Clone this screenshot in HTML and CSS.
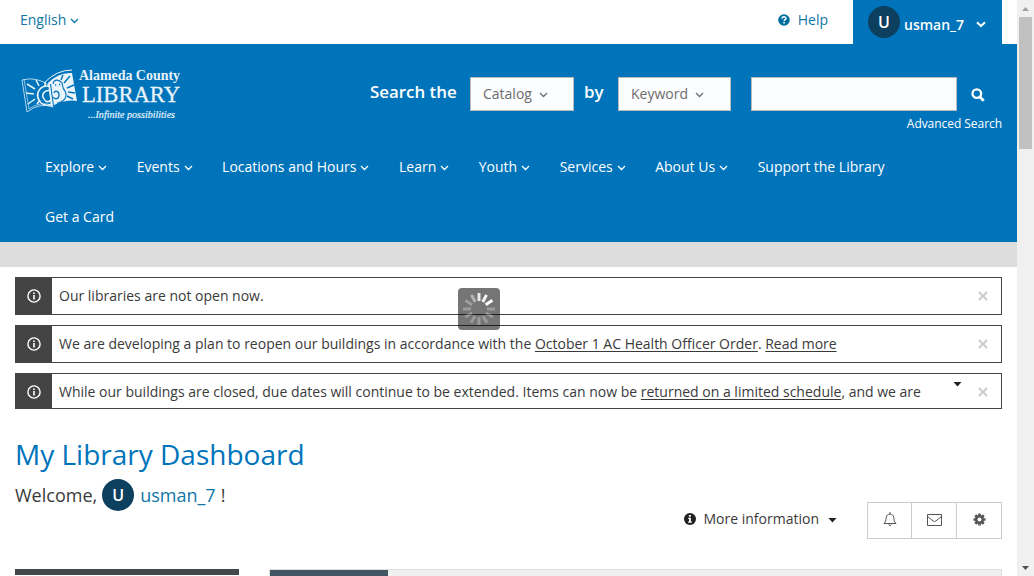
FILE: index.html
```html
<!DOCTYPE html>
<html lang="en">
<head>
<meta charset="utf-8">
<title>My Library Dashboard</title>
<link rel="stylesheet" href="styles.css">
</head>
<body>
<svg class="defs" width="0" height="0">
  <symbol id="chev" viewBox="0 0 9 6"><path d="M1 1 L4.5 4.5 L8 1" fill="none" stroke="currentColor" stroke-width="1.3"/></symbol>
  <symbol id="info" viewBox="0 0 14 14"><circle cx="7" cy="7" r="6.1" fill="none" stroke="currentColor" stroke-width="1.4"/><path d="M6.2 3.4h1.6v1.5H6.2zM6.2 6h1.6v4.6H6.2z" fill="currentColor"/></symbol>
  <symbol id="close" viewBox="0 0 10 10"><path d="M1 1 L9 9 M9 1 L1 9" fill="none" stroke="currentColor" stroke-width="2"/></symbol>
</svg>
<div class="window">
<div class="page">
  <div class="topbar">
    <a class="language">English <svg class="chev"><use href="#chev"/></svg></a>
    <a class="help"><svg class="help-icon" viewBox="0 0 12 12"><circle cx="6" cy="6" r="5.8" fill="currentColor"/><path d="M4 4.6C4.1 2.3 8 2.3 7.9 4.5C7.9 5.7 6.1 5.7 6.1 7.1" fill="none" stroke="#fff" stroke-width="1.5"/><path d="M5.3 8h1.6v1.6H5.3z" fill="#fff"/></svg>Help</a>
    <a class="account"><span class="avatar">U</span><span class="account-name">usman_7</span><svg class="account-chev" viewBox="0 0 10 7"><path d="M1 1.2 L5 5 L9 1.2" fill="none" stroke="#fff" stroke-width="2"/></svg></a>
  </div>
  <header class="header">
    <div class="masthead">
      <svg class="logo" viewBox="0 0 164 60" width="164" height="60" fill="#e9f3fa">
        <g fill="none" stroke="#e9f3fa" stroke-width="1">
          <path d="M2 18 Q17 14 30 24 L33 45 Q20 40 7 50 Z" stroke-opacity=".75"/>
          <path d="M4 17 L9 47 Q20 39 32 43" stroke-opacity=".6"/>
          <path d="M7 22l8 5M16 18l3 6M6 31l8 1M8 42l7-5M17 42l3-4M25 20l0 4" stroke-width="1.5"/>
          <path d="M31 25C21 21 15 31 19 38C22 44 29 44 32 42M31 29C24 27 21 33 24 37C26 41 30 40 32 37" stroke-width="1.6"/>
        </g>
        <path d="M28 21 Q39 10 52 11 L57 39 Q43 37 31 45 Z"/>
        <g fill="none" stroke="#0074bb" stroke-width="1.1">
          <path d="M30.500 22 L33.500 44"/>
          <path d="M33 22C34 17 39 17 42 21C43 24 42 26 45 29C48 35 44 40 37 41"/>
          <path d="M34 31C35 28 39 29 39 33C39 37 35 38 33 35" stroke-width="1.300"/>
          <path d="M43 13l-2 5M50 14l-6 7M54 23l-7 3M55 31l-7-1M53 37l-6-3" stroke-width="1.500"/>
          <path d="M35 23h1.200M39 22.500h1.200" stroke-width="1.600"/>
        </g>
        <path d="M25 20 Q37 8 52 8" fill="none" stroke="#e9f3fa"/>
        <text class="logo-county" x="59" y="17.500" textLength="101" lengthAdjust="spacingAndGlyphs">Alameda County</text>
        <text class="logo-library" x="62" y="40" textLength="98" lengthAdjust="spacingAndGlyphs">LIBRARY</text>
        <text class="logo-tag" x="68" y="56" textLength="87" lengthAdjust="spacingAndGlyphs">...Infinite possibilities</text>
      </svg>
      <div class="search">
        <span class="search-label">Search the</span>
        <span class="select catalog">Catalog <svg class="chev"><use href="#chev"/></svg></span>
        <span class="search-label by">by</span>
        <span class="select keyword">Keyword <svg class="chev"><use href="#chev"/></svg></span>
        <input class="query" type="text" aria-label="Search">
        <svg class="search-icon" viewBox="0 0 14 14"><circle cx="5.8" cy="5.6" r="4.3" fill="none" stroke="#fff" stroke-width="2.3"/><path d="M9 9 L12.7 12.7" stroke="#fff" stroke-width="2.8"/></svg>
      </div>
    </div>
    <a class="advanced">Advanced Search</a>
    <nav class="nav">
      <a>Explore<svg class="chev"><use href="#chev"/></svg></a>
      <a>Events<svg class="chev"><use href="#chev"/></svg></a>
      <a>Locations and Hours<svg class="chev"><use href="#chev"/></svg></a>
      <a>Learn<svg class="chev"><use href="#chev"/></svg></a>
      <a>Youth<svg class="chev"><use href="#chev"/></svg></a>
      <a>Services<svg class="chev"><use href="#chev"/></svg></a>
      <a>About Us<svg class="chev"><use href="#chev"/></svg></a>
      <a>Support the Library</a>
      <a>Get a Card</a>
    </nav>
  </header>
  <div class="band"></div>
  <main class="content">
    <div class="alerts">
      <div class="alert"><span class="alert-icon"><svg><use href="#info"/></svg></span><p>Our libraries are not open now.</p><svg class="close"><use href="#close"/></svg></div>
      <div class="alert"><span class="alert-icon"><svg><use href="#info"/></svg></span><p>We are developing a plan to reopen our buildings in accordance with the <u>October 1 AC Health Officer Order</u>. <u>Read more</u></p><svg class="close"><use href="#close"/></svg></div>
      <div class="alert last"><span class="alert-icon"><svg><use href="#info"/></svg></span><p>While our buildings are closed, due dates will continue to be extended. Items can now be <u>returned on a limited schedule</u>, and we are</p><i class="caret expand"></i><svg class="close"><use href="#close"/></svg></div>
    </div>
    <h1>My Library Dashboard</h1>
    <div class="welcome"><span>Welcome,</span><span class="avatar">U</span><a>usman_7</a><span class="bang">!</span></div>
    <div class="tools">
      <a class="more"><svg class="more-icon" viewBox="0 0 12 12"><circle cx="6" cy="6" r="6" fill="#222"/><path d="M4.9 2h2v1.7h-2zM4.2 4.8h2.7v3.7h.9v1.3H4.2V8.500h.9V6h-.9z" fill="#fff"/></svg>More information<i class="caret"></i></a>
      <div class="buttons">
        <span><svg width="14" height="15" viewBox="0 0 14 15" fill="none" stroke="#555"><path d="M1 11.500C3 9.500 3 8 3.200 5.500C3.500 1 10.500 1 10.800 5.500C11 8 11 9.500 13 11.500Z"/><path d="M7 0v2M5.500 12.500Q7 15 8.500 12.500"/></svg></span>
        <span><svg width="15" height="12" viewBox="0 0 15 12" fill="none" stroke="#555"><path d="M.5.5h14v11H.5zM.5 2.500L6.200 7Q7.500 8 8.800 7L14.500 2.500"/></svg></span>
        <span><svg width="13" height="13" viewBox="-6.500 -6.500 13 13"><g stroke="#555" stroke-width="2.600"><path d="M0-6V6M-6 0H6M-4.250-4.250L4.250 4.250M4.250-4.250L-4.250 4.250"/></g><circle r="4.500" fill="#555"/><circle r="2" fill="#fff"/></svg></span>
      </div>
    </div>
    <div class="panels"><div class="side-panel"></div><div class="main-panel"><div class="tab"></div></div></div>
  </main>
  <div class="loader"><svg width="42" height="42" viewBox="-21 -21 42 42" stroke="#fff" stroke-width="3">
    <path d="M0-8V-16" opacity=".85"/><path d="M0-8V-16" transform="rotate(28)" opacity=".92"/><path d="M0-8V-16" transform="rotate(57)"/>
    <g opacity=".28"><path d="M0-8V-16" transform="rotate(90)"/><path d="M0-8V-16" transform="rotate(120)"/><path d="M0-8V-16" transform="rotate(150)"/><path d="M0-8V-16" transform="rotate(180)"/><path d="M0-8V-16" transform="rotate(210)"/><path d="M0-8V-16" transform="rotate(240)"/><path d="M0-8V-16" transform="rotate(270)"/></g>
    <path d="M0-8V-16" transform="rotate(302)" opacity=".3"/><path d="M0-8V-16" transform="rotate(332)" opacity=".45"/>
  </svg></div>
</div>
<div class="scrollbar"><i class="arrow up"></i><div class="thumb"></div><i class="arrow down"></i></div>
</div>
</body>
</html>
```
FILE: styles.css
```css
* { box-sizing: border-box; }
body { margin: 0; overflow: hidden; font: 14px/20px "Open Sans", "Noto Sans", sans-serif; color: #3a3a3a; background: #fff; }
svg { display: block; flex: none; }
.defs { position: absolute; }
.window { display: flex; height: 576px; }
.page { position: relative; width: 1017px; height: 576px; overflow: hidden; }
.chev { width: 9px; height: 6px; margin-left: 4px; }

.topbar { display: flex; height: 44px; padding: 0 15px 0 20px; color: #0f76a6; }
.language { display: flex; align-items: center; height: 40px; }
.language .chev { margin-top: 2px; }
.help { display: flex; align-items: center; height: 40px; margin-left: auto; margin-right: 25px; }
.help-icon { width: 12px; height: 12px; margin-right: 8px; color: #006d9e; }
.account { display: flex; align-items: center; width: 149px; padding: 0 16px 0 15px; background: #0074bb; color: #fff; font-weight: 600; }
.avatar { width: 32px; height: 32px; flex: none; border-radius: 50%; background: #0d3f5f; color: #fff; font: 600 16px/33px "Open Sans", sans-serif; text-align: center; }
.account-name { margin: 6px 0 0 4px; }
.account-chev { width: 10px; height: 7px; margin: 5px 0 0 auto; }

.header { height: 198px; background: #0074bb; color: #fff; }
.masthead { display: flex; height: 71px; padding: 17px 32px 0 20px; }
.logo { margin-top: 1px; }
.logo-county { font: bold 14px "Liberation Serif", serif; }
.logo-library { font: 24px "Liberation Serif", serif; stroke: #e9f3fa; stroke-width: .3px; }
.logo-tag { font: italic 10.500px "Liberation Serif", serif; stroke: #e9f3fa; stroke-width: .2px; }
.search { display: flex; align-items: flex-start; padding-top: 16px; margin-left: auto; }
.search-label { width: 100px; font-size: 16.900px; font-weight: 600; line-height: 30px; white-space: nowrap; }
.by { width: 34px; margin-left: 10px; }
.select { display: flex; align-items: center; height: 34px; padding-left: 12px; border: 1px solid #bbb; background: #fcfdff; color: #6c6c6c; }
.select .chev { margin: 2px 0 0 7px; }
.catalog { width: 104px; }
.keyword { width: 113px; }
.query { width: 206px; height: 34px; margin: 0 14px 0 20px; border: 1px solid #bbb; background: #fcfdff; }
.search-icon { width: 14px; height: 14px; margin-top: 11px; }
.advanced { display: block; height: 27px; padding-right: 15px; font-size: 12px; line-height: 17px; letter-spacing: -.05px; text-align: right; }
.nav { display: flex; flex-wrap: wrap; width: 960px; padding-left: 45px; column-gap: 29.500px; }
.nav a { display: flex; align-items: center; height: 50px; }
.nav .chev { margin-top: 2px; }
.band { height: 25px; background: #ddd; }

.content { padding: 10px 15px 0; }
.alert { display: flex; align-items: center; height: 38px; margin-bottom: 10px; padding-right: 13px; border: 1px solid #444; }
.alert.last { height: 36px; margin-bottom: 0; }
.last p, .last .close, .last .alert-icon svg { margin-top: 2px; }
.alert-icon { display: flex; align-items: center; justify-content: center; align-self: stretch; width: 36px; background: #444; color: #fff; }
.alert-icon svg { width: 14px; height: 14px; }
.alert p { margin-bottom: 0; margin-left: 7px; margin-right: auto; white-space: nowrap; }
.alert:not(.last) p { margin-top: 0; }
.alert u { text-underline-offset: 2px; }
.close { width: 10px; height: 10px; color: #ccc; }
.caret { width: 9px; height: 5px; background: #222; clip-path: polygon(0 0, 100% 0, 50% 100%); }
.expand { margin: -14px 16px 0 0; }
h1 { margin: 25px 0 5px; font-size: 28px; font-weight: 400; line-height: 40px; color: #0074bb; }
.welcome { display: flex; align-items: center; height: 32px; font-size: 18px; }
.welcome .avatar { margin: 0 6px 0 5px; }
.welcome a { color: #0f76a6; }
.bang { margin-left: 5px; }
.tools { display: flex; justify-content: flex-end; height: 67px; margin-top: -9px; }
.more { display: flex; align-items: center; height: 34px; margin-right: 30px; }
.more-icon { width: 12px; height: 12px; margin-right: 8px; }
.more .caret { margin: 2px 0 0 9px; }
.buttons { display: flex; width: 135px; height: 37px; border: 1px solid #ccc; }
.buttons span { display: flex; width: 45px; align-items: center; justify-content: center; padding-bottom: 2px; }
.buttons span:first-child { width: 43px; }
.buttons span + span { border-left: 1px solid #ccc; }
.panels { display: flex; gap: 30px; }
.side-panel { width: 224px; height: 6px; background: #444749; }
.main-panel { flex: 1; height: 10px; border: 1px solid #ddd; background: #f0f0f0; }
.tab { width: 118px; height: 9px; background: #425563; }
.loader { position: absolute; left: 458px; top: 288px; width: 42px; height: 42px; border-radius: 4px; background: rgba(0, 0, 0, .54); }
.scrollbar { display: flex; flex-direction: column; align-items: center; width: 17px; height: 576px; padding: 7px 0 6px; background: #f0f0f0; }
.thumb { width: 13px; height: 132px; margin-top: 6px; background: #c1c1c1; }
.arrow { width: 7px; height: 4px; background: #a0a0a0; clip-path: polygon(50% 0, 100% 100%, 0 100%); }
.down { margin-top: auto; background: #505050; clip-path: polygon(0 0, 100% 0, 50% 100%); }
```
